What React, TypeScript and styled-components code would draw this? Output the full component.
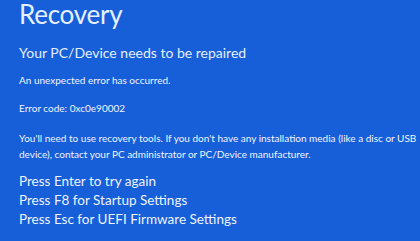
import React from "react";
import styled, { createGlobalStyle } from "styled-components";

const Global = createGlobalStyle`
  html, body { margin: 0; padding: 0; background: #175ed9; }
  body { font-family: "Lato", "Open Sans", sans-serif; color: #ffffff; }
`;

const Screen = styled.div`
  width: 420px;
  height: 241px;
  box-sizing: border-box;
  background: #175ed9;
  padding: 0 0 0 19px;
  overflow: hidden;
  display: flex;
  flex-direction: column;
`;

const Title = styled.h1`
  margin: -2px 0 0 0;
  font-weight: 400;
  font-size: 26px;
  line-height: 32px;
  letter-spacing: -0.25px;
  color: #e6f0ff;
`;

const Heading = styled.h2`
  margin: 13px 0 0 0;
  font-weight: 400;
  font-size: 14px;
  line-height: 20px;
  color: #e3efff;
`;

const Small = styled.p<{ $top: number }>`
  margin: ${(p) => p.$top}px 0 0 0;
  font-size: 10px;
  line-height: 16px;
  white-space: nowrap;
  color: #f0f5ff;
`;

const Options = styled.div`
  margin-top: 10px;
  display: flex;
  flex-direction: column;
`;

const Option = styled.div`
  font-size: 13.5px;
  line-height: 19px;
  color: #eef4ff;
  white-space: nowrap;
`;

export default function App() {
  return (
    <>
      <Global />
      <Screen>
        <Title>Recovery</Title>
        <Heading>Your PC/Device needs to be repaired</Heading>
        <Small $top={9}>An unexpected error has occurred.</Small>
        <Small $top={12}>Error code: 0xc0e90002</Small>
        <Small $top={14}>
          You'll need to use recovery tools. If you don't have any installation media (like a disc or USB
          <br />
          device), contact your PC administrator or PC/Device manufacturer.
        </Small>
        <Options>
          <Option>Press Enter to try again</Option>
          <Option>Press F8 for Startup Settings</Option>
          <Option>Press Esc for UEFI Firmware Settings</Option>
        </Options>
      </Screen>
    </>
  );
}
